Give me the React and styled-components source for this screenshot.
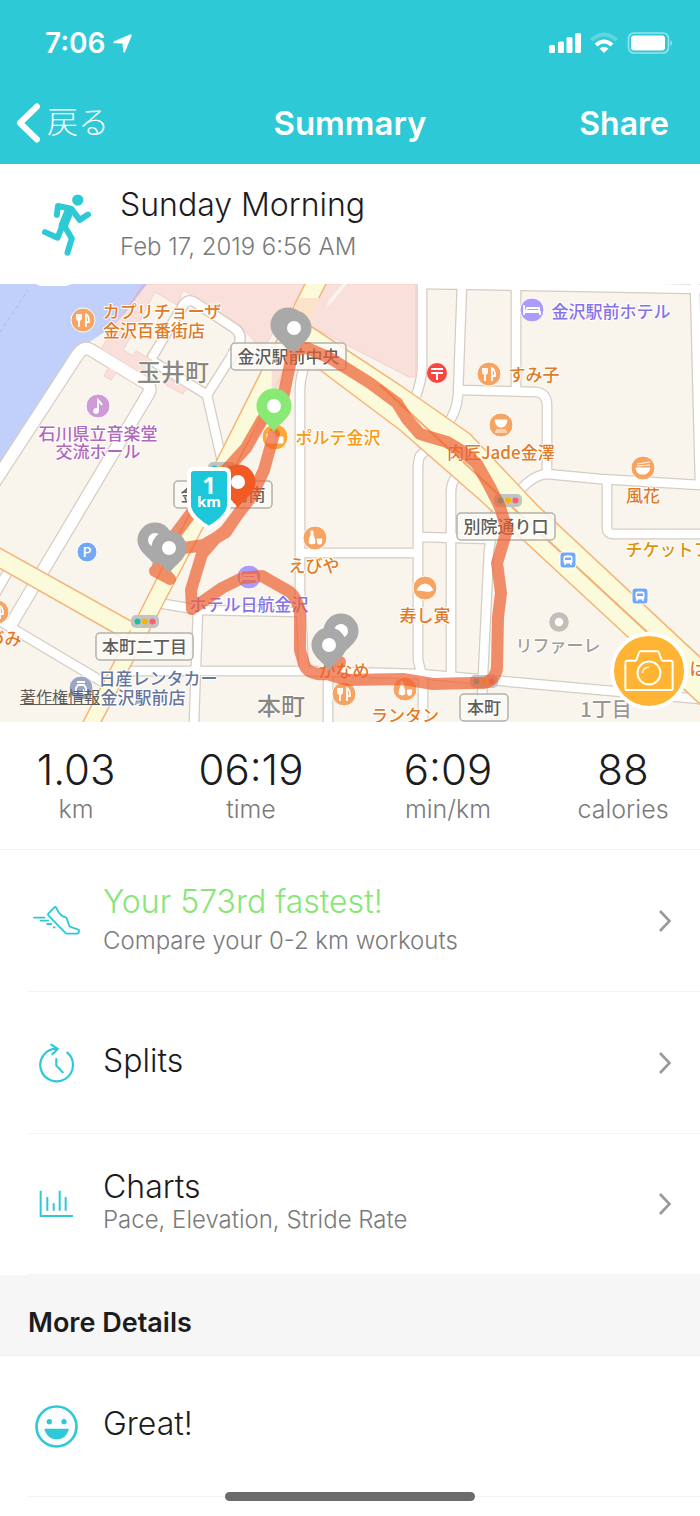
import styled, { createGlobalStyle } from 'styled-components';

const TEAL = '#2dc9d7';
const ORANGE = '#e07b28';
const PURPLE = '#8672e8';

const App = () => {
  return (
    <Page>
      <GlobalStyle />
      <Header>
        <StatusBar>
          <Clock>
            7:06
            <LocationIcon />
          </Clock>
          <StatusIcons />
        </StatusBar>
        <NavBar>
          <BackButton type="button">
            <svg width="25" height="40" viewBox="0 0 25 40" fill="none" stroke="#fff" strokeWidth="6" strokeLinecap="round" strokeLinejoin="round">
              <path d="M21 3.500 4 20l17 16.500" />
            </svg>
            <BackLabel>戻る</BackLabel>
          </BackButton>
          <NavTitle>Summary</NavTitle>
          <ShareButton type="button">Share</ShareButton>
        </NavBar>
      </Header>

      <Workout>
        <RunnerIcon />
        <div>
          <WorkoutName>Sunday Morning</WorkoutName>
          <WorkoutDate>Feb 17, 2019 6:56 AM</WorkoutDate>
        </div>
      </Workout>

      <MapBox>
        <RouteMap />
        <Copyright href="#copyright">著作権情報</Copyright>
        <CameraButton type="button" aria-label="Add photo">
          <CameraIcon />
        </CameraButton>
      </MapBox>

      <Stats>
        {stats.map((s) => (
          <Stat key={s.label}>
            <StatValue>{s.value}</StatValue>
            <StatLabel>{s.label}</StatLabel>
          </Stat>
        ))}
      </Stats>

      <List>
        {rows.map(({ title, subtitle, Icon, highlight }) => (
          <li key={title}>
            <Row type="button">
              <IconCell><Icon /></IconCell>
              <RowText $spaced={highlight}>
                <RowTitle $highlight={highlight}>{title}</RowTitle>
                {subtitle && <RowSubtitle>{subtitle}</RowSubtitle>}
              </RowText>
              <svg width="14" height="24" viewBox="0 0 14 24" fill="none" stroke="#999" strokeWidth="2.600">
                <path d="M2 2l9.500 10L2 22" />
              </svg>
            </Row>
          </li>
        ))}
      </List>

      <SectionTitle>More Details</SectionTitle>
      <List>
        <li>
          <Row as="div">
            <IconCell><SmileIcon /></IconCell>
            <RowText>
              <RowTitle>Great!</RowTitle>
            </RowText>
          </Row>
        </li>
      </List>
      <HomeIndicator />
    </Page>
  );
};

export default App;

// Icons
const LocationIcon = () => (
  <svg width="19" height="19" viewBox="0 0 19 19" fill="#fff">
    <path d="M17 .4Q19 0 18.600 2L12 18Q10.800 19.500 10.200 17.500L9.600 10Q9.600 9.400 9 9.400L1.500 9.200Q-.8 8.700 1 7.300Z" />
  </svg>
);

const StatusIcons = () => (
  <svg width="125" height="22" viewBox="0 0 125 22" fill="#fff">
    <rect x="1" y="13" width="6" height="8" rx="1.500" />
    <rect x="10" y="9.500" width="6" height="11.500" rx="1.500" />
    <rect x="18.500" y="5" width="6" height="16" rx="1.500" />
    <rect x="27" y="1" width="6" height="20" rx="1.500" />
    <g fill="none" stroke="#fff" strokeWidth="4">
      <path d="M43.500 8Q56 -3 68.500 8" opacity=".25" />
      <path d="M48 13Q56 6 64 13" />
    </g>
    <path d="M51.500 16.500Q56 13 60.500 16.500L56 21Z" />
    <rect x="80.500" y="1" width="40" height="20" rx="5.500" fill="none" stroke="#fff" strokeWidth="1.600" opacity=".5" />
    <rect x="83" y="3.500" width="34" height="15" rx="3" />
    <path d="M122.500 8Q126 11 122.500 14Z" opacity=".5" />
  </svg>
);

const RunnerIcon = () => (
  <svg width="49" height="62" viewBox="0 0 148 185" fill="none" stroke={TEAL} strokeWidth="18" strokeLinecap="round" strokeLinejoin="round">
    <circle cx="108" cy="17" r="17" fill={TEAL} stroke="none" />
    <path d="M45 62l3-27 40 8 26 34 25-16" />
    <path d="M82 50L64 95" strokeWidth="28" />
    <path d="M68 96l22 37-13 43M62 94l-15 37-38-17" />
  </svg>
);

const ShoeIcon = () => (
  <svg width="47" height="29" viewBox="0 0 142 87" fill="none" stroke={TEAL} strokeWidth="5.500" strokeLinejoin="round">
    <path d="M63 5L47 22Q44 25 47 29L98 81Q100 83 103 83H134Q139 83 139 74Q139 71 135 70L113 63Q110 62 109 58L102 37Q101 34 97 33Q88 32 83 25Q75 17 71 6Q68 0 63 5Z" />
    <path d="M1 35h36M21 44h27M41 54h16M60 64h8" />
  </svg>
);

const SplitsIcon = () => (
  <svg width="37" height="40" viewBox="0 0 111 120" fill="none" stroke={TEAL} strokeWidth="6.500" strokeLinecap="round">
    <path d="M88 29A49 49 0 1 1 57 17M40 5l19 13-16 16M55 48v20l19 20" />
  </svg>
);

const ChartsIcon = () => (
  <svg width="34" height="28" viewBox="0 0 102 84" fill="none" stroke={TEAL} strokeWidth="6">
    <path d="M5 2v76h97M25 21v41M44 40v22M62 2v60M80 21v41" />
  </svg>
);

const SmileIcon = () => (
  <svg width="43" height="43" viewBox="0 0 129 129" fill={TEAL}>
    <circle cx="64.500" cy="64.500" r="60" fill="#fbfdfe" stroke={TEAL} strokeWidth="8" />
    <circle cx="43" cy="50" r="8" />
    <circle cx="87" cy="50" r="8" />
    <path d="M31 71H99Q103 71 101 76Q92 103 65 103T29 76Q27 71 31 71Z" />
  </svg>
);

const CameraIcon = () => (
  <svg width="50" height="42" viewBox="0 0 150 128" fill="none" stroke="#fff" strokeWidth="6" strokeLinejoin="round">
    <path d="M8 33H32Q36 33 37 29L45 7Q46 4 49 4H101Q104 4 105 7L113 29Q114 33 118 33H142Q147 33 147 38V117Q147 122 142 122H8Q3 122 3 117V38Q3 33 8 33Z" />
    <circle cx="75" cy="70" r="35" />
    <path d="M55 70Q57 53 75 52" strokeWidth="4" />
  </svg>
);

// Map
const wideRoads = [
  'M-6 483L78 354Q84 346 91 350L146 383Q153 388 147 396L10 626',
];

const whiteRoads = [
  'M-6 596L9 570',
  'M0 621L106 684',
  'M154 362Q150 358 154 354L184 304Q189 298 196 303L234 328Q244 335 238 346L207 395L154 362M207 395L224 470',
  'M306 362Q300 376 300 390V590L304 674',
  'M126 671H308L420 674L490 680L700 699',
  'M328 678V722',
  'M198 610L194 722',
  'M158 603L200 610L298 612',
  'M422 284V370Q421 382 416 396',
  'M430 446L420 456Q418 460 418 470V660L423 680V722',
  'M462 284L458 395Q457 412 446 426',
  'M458 474Q451 482 451 492V676',
  'M422 284L700 289',
  'M516 286V390',
  'M458 390L536 392Q547 393 547 406V474',
  'M512 500Q530 475 547 474L600 479L700 485',
  'M607 480V528Q607 534 614 534H702',
  'M695 284L700 485',
  'M302 553H418',
  'M420 537L490 539',
  'M497 505L489 550L483 675L481 722',
];

const ROUTE =
  'M274 434L264 470L252 496L238 514L226 532L204 545L184 548L168 560L155 571L170 579L158 566L174 536L192 512L226 470L246 448L262 420L283 398L293 350L307 348L330 358L370 383L397 403L407 419L420 434L447 442L462 451L477 464L490 487L500 507L507 530L497 563L501 593L498 617L497 667Q496 680 484 683L470 683L433 684L403 679L347 680L330 675L340 662L330 674Q308 676 304 664L300 650V612Q297 598 290 592L262 576L242 578L222 588L192 609L191 590L202 554L214 540L226 530L238 514';

const glyphs = {
  food: <path d="M-6-6v4q0 2 2 2v7M-2-6v4q0 2-2 2M-4-6v5M3 7V-6q3 1 3 8H3" />,
  bed: <path d="M-8-5V5M-8 2H8V5M-5-2H7V1H-6Z" />,
  note: <path d="M0 5V-6Q3-3 4-1" />,
  bowl: <path d="M-6-5H6Q5 2 1 2H-1Q-5 2-6-5ZM-5 5H5M-6 7H6" fill="#fff" strokeWidth="1" />,
  noodle: <path d="M-7 0H7Q5 6 2 6H-2Q-6 6-7 0ZM-6-4L7-6M-6-2L7-3" fill="#fff" strokeWidth="1" />,
  sake: <path d="M-4-7H-2V-3Q0 0 0 5Q-3 7-6 5Q-6 0-4-3ZM2 1H7L6 6H3Z" fill="#fff" strokeWidth="1" />,
  sushi: <path d="M-8 2Q-5-4 0-4T8 2Q5 4 0 3T-8 2Z" fill="#fff" strokeWidth="1" />,
  shop: <path d="M-8-3H0V6H-8ZM1 0H8V6H1ZM-6-3V-6H-2V-3" fill="#fff" strokeWidth="1" />,
  car: <path d="M-5 0L-3-3H3L5 0V5H-5ZM-4-6H4M-3 2H-2M2 2H3" />,
};

const pois = [
  { x: 83, y: 320, glyph: 'food' },
  { x: 489, y: 374, glyph: 'food' },
  { x: 344, y: 694, glyph: 'food' },
  { x: -3, y: 612, glyph: 'food' },
  { x: 501, y: 425, glyph: 'bowl' },
  { x: 643, y: 468, glyph: 'noodle' },
  { x: 315, y: 538, glyph: 'sake' },
  { x: 405, y: 689, glyph: 'sake' },
  { x: 425, y: 588, glyph: 'sushi' },
  { x: 275, y: 437, glyph: 'shop', color: '#fba834', r: 13 },
  { x: 98, y: 406, glyph: 'note', color: '#cf9bd6' },
  { x: 532, y: 310, glyph: 'bed', color: '#ab9bfb' },
  { x: 249, y: 577, glyph: 'bed', color: '#ab9bfb' },
  { x: 81, y: 688, glyph: 'car', color: '#9aa6c2' },
];

const placeNames = [
  { x: 162, y: 318, text: 'カプリチョーザ' },
  { x: 154, y: 337, text: '金沢百番街店' },
  { x: 98, y: 440, text: '石川県立音楽堂', color: '#b069ba' },
  { x: 98, y: 458, text: '交流ホール', color: '#b069ba' },
  { x: 611, y: 318, text: '金沢駅前ホテル', color: PURPLE },
  { x: 534, y: 381, text: 'すみ子' },
  { x: 501, y: 459, text: '肉匠Jade金澤' },
  { x: 643, y: 502, text: '風花' },
  { x: 338, y: 444, text: 'ポルテ金沢', color: '#f59a12' },
  { x: 314, y: 572, text: 'えびや' },
  { x: 425, y: 622, text: '寿し寅' },
  { x: 249, y: 611, text: 'ホテル日航金沢', color: PURPLE },
  { x: 344, y: 677, text: 'かなめ' },
  { x: 405, y: 722, text: 'ランタン' },
  { x: -4, y: 645, text: 'あづみ' },
  { x: 668, y: 556, text: 'チケットフ', color: '#db940e' },
  { x: 558, y: 652, text: 'リファーレ', color: '#a09d98' },
  { x: 698, y: 675, text: 'は' },
  { x: 158, y: 685, text: '日産レンタカー', color: '#66759c' },
  { x: 143, y: 704, text: '金沢駅前店', color: '#66759c' },
];

const junctions = [
  { x: 231, y: 343, w: 115, text: '金沢駅前中央' },
  { x: 174, y: 481, w: 98, text: '金沢駅前南' },
  { x: 96, y: 633, w: 97, text: '本町二丁目' },
  { x: 457, y: 513, w: 98, text: '別院通り口' },
  { x: 460, y: 694, w: 48, text: '本町' },
];

const pins = [
  { x: 288, y: 325, color: '#a9a9a9' },
  { x: 294, y: 328, color: '#a9a9a9' },
  { x: 155, y: 540, color: '#a9a9a9' },
  { x: 169, y: 548, color: '#a9a9a9' },
  { x: 341, y: 631, color: '#a9a9a9' },
  { x: 329, y: 645, color: '#a9a9a9' },
  { x: 238, y: 482, color: '#f15a22' },
  { x: 274, y: 406, color: '#88e975' },
];

const Signal = ({ x, y }) => (
  <g>
    <rect x={x - 14} y={y - 7} width="28" height="13" rx="5" fill="#c3c3c3" />
    <circle cx={x - 7.500} cy={y - 0.500} r="3" fill="#20bfa5" />
    <circle cx={x} cy={y - 0.500} r="3" fill="#f7b500" />
    <circle cx={x + 7.500} cy={y - 0.500} r="3" fill="#f9646c" />
  </g>
);

const Bus = ({ x, y }) => (
  <g transform={`translate(${x} ${y})`}>
    <rect x="-8" y="-8" width="16" height="16" rx="3" fill="#72a8f5" stroke="#fff" />
    <rect x="-4.500" y="-4.500" width="9" height="8" rx="2" fill="#fff" />
    <path d="M-3-2.500H3V0H-3Z" fill="#72a8f5" />
    <path d="M-3 3V5M3 3V5" stroke="#fff" strokeWidth="1.500" />
  </g>
);

const RouteMap = () => (
  <MapSvg viewBox="0 284 700 438" role="img" aria-label="Route map">
    <rect y="284" width="700" height="438" fill="#f9f4ec" />
    <path d="M0 284H142L115 325L88 343L76 350L0 470Z" fill="#c0d0fb" />
    <path d="M0 332L28 290" stroke="#a9b9e8" strokeDasharray="4 3" />
    <path d="M36 284H72L66 286H40Z" fill="#fff" />

    <g fill="none" strokeLinejoin="round">
      {wideRoads.map((d) => <path key={d} d={d} stroke="#d5cdc2" strokeWidth="14" />)}
      {whiteRoads.map((d) => <path key={d} d={d} stroke="#d5cdc2" strokeWidth="11" />)}
      {wideRoads.map((d) => <path key={d} d={d} stroke="#fff" strokeWidth="11.500" />)}
      {whiteRoads.map((d) => <path key={d} d={d} stroke="#fff" strokeWidth="8.500" />)}
    </g>

    <g fill="#fae0da" stroke="#f7cfcc" strokeWidth="1">
      <path d="M142 284L117 322L101 349L147 377L152 360L136 351L133 356L123 350L132 335L155 292L177 305L183 290L240 325L262 350L306 284Z" />
      <path d="M327 284H416V377H409L312 327L300 322Z" />
      <path d="M113 360L121 365L111 380L104 376ZM168 378L187 388L183 394L166 385Z" />
    </g>
    <g fill="none" strokeLinejoin="round">
      <path d="M154 354L184 304Q189 298 196 303L234 328Q244 335 238 346L232 354" stroke="#d5cdc2" strokeWidth="11" />
      <path d="M154 354L184 304Q189 298 196 303L234 328Q244 335 238 346L231 356" stroke="#fff" strokeWidth="8.500" />
      <path d="M96 353L142 381" stroke="#fff" strokeWidth="11" />
    </g>
    <path d="M142 284L117 322L124 314L147 284Z" fill="#c8bde6" />
    <path d="M342 284L328 302L327 308L347 284Z" fill="#f9f4ec" />

    <g fill="#fbfbdb" stroke="#f5b477" strokeWidth="1.500">
      <path d="M-4 546L138 625L128 641L-4 566Z" />
      <path d="M306 282L228 438L140 612L82 724H100L160 610L207 520L265 410L300 335L327 282Z" />
      <path d="M300 322L312 327L400 385L470 434L537 505L702 659V706L628 637L480 500L400 430L308 361L296 362Z" />
    </g>
    <path d="M130 628L142 614L153 621L136 653ZM284 332L308 326L318 364L280 366Z" fill="#fbfbdb" />
    <path d="M299 298L320 298L304 332H283Z" fill="#fbe3ca" />
    <path d="M271 345L290 350L276 410L254 440L251 434L272 398Z" fill="#f9d9d2" opacity=".8" />
    <path d="M380 385L512 507L647 632" fill="none" stroke="#f3ae73" strokeWidth="2" />

    <Place x="173" y="381" $size="24" $color="#8b8882">玉井町</Place>
    <Place x="281" y="715" $size="24" $color="#8b8882">本町</Place>
    <Place x="606" y="717" $size="20" $color="#9a9792">1丁目</Place>

    <Signal x={222} y={469} />
    <Signal x={145} y={622} />
    <Signal x={508} y={501} />
    <Signal x={484} y={682} />
    <Bus x={568} y={560} />
    <Bus x={640} y={596} />

    <circle cx="87" cy="552" r="10" fill="#72a8f5" stroke="#fff" />
    <Badge x="87" y="557" $size="15">P</Badge>
    <circle cx="437" cy="373" r="10" fill="#f8453f" />
    <path d="M431 369H443M431 373H443M437 373V380" stroke="#fff" strokeWidth="2" />
    <circle cx="559" cy="622" r="7" fill="#fff" stroke="#c2beb8" strokeWidth="5.500" />

    {pois.map(({ x, y, glyph, color = '#f7a362', r = 12 }) => (
      <g key={`${x}-${y}`} transform={`translate(${x} ${y})`} fill="none" stroke="#fff" strokeWidth="1.800">
        <circle r={r} fill={color} strokeWidth="1" />
        {glyphs[glyph]}
        {glyph === 'note' && <circle cx="-2" cy="5" r="2" fill="#fff" />}
      </g>
    ))}

    {junctions.map((j) => (
      <g key={j.text}>
        <rect x={j.x} y={j.y} width={j.w} height="27" rx="4" fill="#fbf9f4" fillOpacity=".85" stroke="#b3b1ac" strokeWidth="1.500" />
        <Place x={j.x + j.w / 2} y={j.y + 20} $color="#5f5d59">{j.text}</Place>
      </g>
    ))}
    {placeNames.map((p) => (
      <Place key={p.text} x={p.x} y={p.y} $color={p.color}>{p.text}</Place>
    ))}

    <path d={ROUTE} fill="none" stroke="#ee5f30" strokeOpacity=".7" strokeWidth="12" strokeLinejoin="round" strokeLinecap="round" />

    {pins.map(({ x, y, color }) => (
      <g key={`${x}-${y}`} transform={`translate(${x} ${y})`}>
        <path d="M0 26C-4 18-17.500 12-17.500 0A17.500 17.500 0 1 1 17.500 0C17.500 12 4 18 0 26Z" fill={color} />
        <circle r="7" fill="#fff" />
      </g>
    ))}

    <path d="M194 469H224Q229 469 229 474V505Q229 516 209 528Q189 516 189 505V474Q189 469 194 469Z" fill="#1cc7d9" stroke="#fff" strokeWidth="4" />
    <Badge x="209" y="494" $size="24" $bold>1</Badge>
    <Badge x="209" y="507" $size="15" $bold>km</Badge>
  </MapSvg>
);

const stats = [
  { value: '1.03', label: 'km' },
  { value: '06:19', label: 'time' },
  { value: '6:09', label: 'min/km' },
  { value: '88', label: 'calories' },
];

const rows = [
  { title: 'Your 573rd fastest!', subtitle: 'Compare your 0-2 km workouts', Icon: ShoeIcon, highlight: true },
  { title: 'Splits', Icon: SplitsIcon },
  { title: 'Charts', subtitle: 'Pace, Elevation, Stride Rate', Icon: ChartsIcon },
];

// Styled Components
const GlobalStyle = createGlobalStyle`
  * {
    box-sizing: border-box;
  }
  body {
    margin: 0;
    background: #fff;
    color: #1c1c1e;
    font-family: Inter, 'Noto Sans CJK JP', sans-serif;
  }
  button {
    border: 0;
    padding: 0;
    background: none;
    color: inherit;
    font: inherit;
    text-align: left;
    cursor: pointer;
  }
`;

const Page = styled.main`
  width: 100%;
`;

const Header = styled.header`
  background: ${TEAL};
  color: #fff;
`;

const StatusBar = styled.div`
  display: flex;
  align-items: center;
  justify-content: space-between;
  height: 84px;
  padding: 2px 27px 0 45px;
`;

const Clock = styled.div`
  display: flex;
  align-items: center;
  gap: 7px;
  font-size: 28px;
  font-weight: 600;
`;

const NavBar = styled.nav`
  display: grid;
  grid-template-columns: 1fr auto 1fr;
  align-items: center;
  height: 80px;
  padding-bottom: 2px;
  font-size: 32px;
`;

const BackButton = styled.button`
  display: flex;
  align-items: center;
  gap: 6px;
  padding-left: 16px;
`;

const BackLabel = styled.span`
  padding-bottom: 6px;
  font-family: 'Noto Sans CJK JP', sans-serif;
  font-size: 31px;
  font-weight: 300;
  line-height: 40px;
`;

const NavTitle = styled.h1`
  margin: 0;
  font-size: 33px;
  font-weight: 600;
`;

const ShareButton = styled.button`
  justify-self: end;
  padding-right: 31px;
  font-weight: 600;
`;

const Workout = styled.section`
  display: flex;
  align-items: center;
  gap: 29px;
  height: 120px;
  padding: 2px 42px 0;
`;

const WorkoutName = styled.h2`
  margin: 0;
  font-size: 32px;
  font-weight: 300;
  line-height: 44px;
`;

const WorkoutDate = styled.p`
  margin: 0;
  color: #7a7a7a;
  font-size: 24px;
  font-weight: 300;
  line-height: 40px;
`;

const MapBox = styled.section`
  position: relative;
`;

const MapSvg = styled.svg`
  display: block;
  width: 100%;
  height: auto;
`;

const Place = styled.text`
  fill: ${(p) => p.$color || ORANGE};
  stroke: #fff;
  stroke-width: 2px;
  stroke-linejoin: round;
  paint-order: stroke;
  font-family: 'Noto Sans CJK JP', sans-serif;
  font-size: ${(p) => p.$size || 17}px;
  font-weight: 500;
  text-anchor: middle;
`;

const Badge = styled.text`
  fill: #fff;
  font-family: 'Noto Sans', sans-serif;
  font-size: ${(p) => p.$size}px;
  font-weight: ${(p) => (p.$bold ? 700 : 500)};
  text-anchor: middle;
`;

const Copyright = styled.a`
  position: absolute;
  left: 20px;
  bottom: 14px;
  color: #5c5b58;
  font-family: 'Noto Sans CJK JP', sans-serif;
  font-size: 16px;
  line-height: 24px;
`;

const CameraButton = styled.button`
  position: absolute;
  right: 12px;
  bottom: 12px;
  display: flex;
  align-items: center;
  justify-content: center;
  width: 78px;
  height: 78px;
  border: 4px solid #fff;
  border-radius: 50%;
  background: #ffb433;
`;

const Stats = styled.dl`
  display: grid;
  grid-template-columns: 152fr 198fr 196fr 154fr;
  align-content: center;
  height: 128px;
  margin: 0;
  padding-top: 2px;
  border-bottom: 1px solid #f1f1f1;
`;

const Stat = styled.div`
  display: flex;
  flex-direction: column;
  align-items: center;
`;

const StatValue = styled.dd`
  order: -1;
  margin: 0;
  font-size: 42px;
  font-weight: 300;
  line-height: 44px;
`;

const StatLabel = styled.dt`
  color: #7a7a7a;
  font-size: 25px;
  font-weight: 300;
  line-height: 34px;
`;

const List = styled.ul`
  margin: 0;
  padding: 0 0 0 28px;
  list-style: none;

  li {
    border-bottom: 1px solid #f4f4f4;
  }
`;

const Row = styled.button`
  display: flex;
  align-items: center;
  width: 100%;
  height: 140px;
  padding-right: 28px;

  li:not(:last-child) > & {
    height: 141px;
  }
`;

const IconCell = styled.span`
  display: flex;
  justify-content: center;
  width: 56px;
  margin-right: 19px;
`;

const RowText = styled.span`
  display: flex;
  flex: 1;
  flex-direction: column;
  gap: ${(p) => (p.$spaced ? 6 : 0)}px;
  padding-bottom: ${(p) => (p.$spaced ? 2 : 4)}px;
`;

const RowTitle = styled.span`
  color: ${(p) => (p.$highlight ? '#88e577' : 'inherit')};
  font-size: 32px;
  font-weight: 300;
  line-height: 36px;
`;

const RowSubtitle = styled.span`
  color: #7a7a7a;
  font-size: 24px;
  font-weight: 300;
  line-height: 30px;
`;

const SectionTitle = styled.h2`
  margin: 0;
  padding: 28px 28px 12px;
  border-bottom: 1px solid #efefef;
  background: #f6f6f6;
  font-size: 27px;
  font-weight: 600;
  line-height: 40px;
`;

const HomeIndicator = styled.div`
  position: fixed;
  bottom: 15px;
  left: 50%;
  width: 250px;
  height: 9px;
  margin-left: -125px;
  border-radius: 5px;
  background: #6b6b6b;
`;
